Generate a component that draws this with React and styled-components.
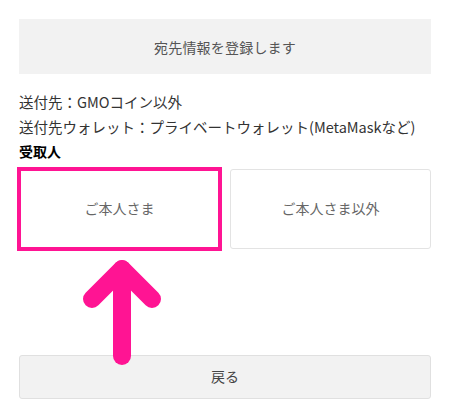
import React from "react";
import styled, { createGlobalStyle } from "styled-components";

const GlobalStyle = createGlobalStyle`
  body {
    margin: 0;
    background: #fff;
    font-family: "Noto Sans CJK JP", "Noto Sans", sans-serif;
  }
`;

const Page = styled.div`
  width: 450px;
  height: 418px;
  box-sizing: border-box;
  padding: 19px 19px 0;
  display: flex;
  flex-direction: column;
`;

const Banner = styled.div`
  height: 55px;
  background: #f2f2f2;
  display: flex;
  align-items: center;
  justify-content: center;
  color: #555;
  font-size: 14px;
  letter-spacing: 0.2px;
`;

const Info = styled.div`
  margin-top: 15px;
  font-size: 14.5px;
  line-height: 25px;
  color: #333;
  p {
    margin: 0;
    white-space: nowrap;
  }
  .label {
    font-weight: bold;
    font-size: 14px;
    color: #000;
  }
`;

const Choices = styled.div`
  margin-top: 5px;
  display: grid;
  grid-template-columns: 1fr 1fr;
  gap: 10px;
`;

const Choice = styled.button`
  height: 80px;
  background: #fff;
  border: 1px solid #e3e3e3;
  border-radius: ${(props) => (props.marked ? "0" : "3px")};
  font: 14px "Noto Sans CJK JP", sans-serif;
  color: #666;
  cursor: pointer;
  outline: ${(props) => (props.marked ? "4px solid #ff1493" : "none")};
  outline-offset: -2px;
  padding: 0 0 2px;
`;

const Spacer = styled.div`
  position: relative;
  height: 106px;
`;

const Arrow = styled.svg`
  position: absolute;
  left: 62px;
  top: 11px;
  z-index: 2;
`;

const BackButton = styled.button`
  height: 44px;
  background: #f2f2f2;
  border: 1px solid #e0e0e0;
  border-radius: 3px;
  font: 14px "Noto Sans CJK JP", sans-serif;
  color: #444;
  cursor: pointer;
  padding: 0 0 3px;
`;

export default function App() {
  return (
    <>
      <GlobalStyle />
      <Page>
        <Banner>宛先情報を登録します</Banner>
        <Info>
          <p>送付先：GMOコイン以外</p>
          <p>送付先ウォレット：プライベートウォレット(MetaMaskなど)</p>
          <p className="label">受取人</p>
        </Info>
        <Choices>
          <Choice marked>ご本人さま</Choice>
          <Choice>ご本人さま以外</Choice>
        </Choices>
        <Spacer>
          <Arrow width="82" height="106" viewBox="0 0 82 106">
            <g fill="none" stroke="#ff1493" strokeWidth="18" strokeLinecap="round" strokeLinejoin="round">
              <polyline points="11,39 41,9 71,39" />
              <line x1="41" y1="9" x2="41" y2="96" />
            </g>
          </Arrow>
        </Spacer>
        <BackButton>戻る</BackButton>
      </Page>
    </>
  );
}
